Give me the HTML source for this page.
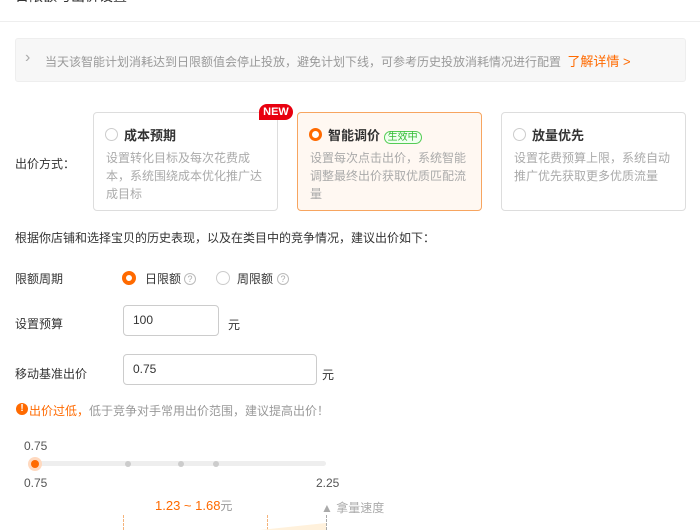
<!DOCTYPE html><html><head><meta charset="utf-8"><style>
*{margin:0;padding:0;box-sizing:border-box}
body{width:700px;height:530px;overflow:hidden;background:#fff;font-family:"Liberation Sans","Noto Sans CJK SC",sans-serif;font-size:12px;color:#333;position:relative}
.a{position:absolute;white-space:nowrap}
.card{position:absolute;top:112px;width:185px;height:99px;border:1px solid #ddd;border-radius:4px;background:#fff}
.card .t{position:absolute;left:30px;top:12px;font-size:13px;font-weight:bold;color:#333}
.card .r{position:absolute;left:11px;top:15px;width:13px;height:13px;border:1px solid #ccc;border-radius:50%;background:#fff}
.card .d{position:absolute;left:12px;top:36px;width:160px;color:#aaa;font-size:12px;line-height:18px;white-space:normal}
.rad{position:absolute;width:14px;height:14px;border-radius:50%}
.q{position:absolute;width:12px;height:12px;border:1px solid #bbb;border-radius:50%;font-size:9px;color:#aaa;text-align:center;line-height:10px}
.inp{position:absolute;border:1px solid #ccc;border-radius:4px;padding-left:9px;line-height:29px;font-size:12px;color:#333}
.dash{position:absolute;top:515px;width:0;height:15px;border-left:1px dashed #f5b37a}
</style></head><body>
<div class="a" style="left:15px;top:-14px;font-size:14px;color:#333">日限额与出价设置</div>
<div class="a" style="left:0;top:21px;width:700px;height:1px;background:#eee"></div>
<div class="a" style="left:15px;top:38px;width:671px;height:44px;background:#f7f7f7;border:1px solid #eee;border-radius:3px"></div>
<div class="a" style="left:25px;top:49px;color:#aaa;font-size:16px">›</div>
<div class="a" style="left:45px;top:51px;color:#999;font-size:12px">当天该智能计划消耗达到日限额值会停止投放，避免计划下线，可参考历史投放消耗情况进行配置 <span style="color:#ff6a00;font-size:13px;margin-left:3px">了解详情 &gt;</span></div>
<div class="a" style="left:15px;top:155px">出价方式：</div>
<div class="card" style="left:93px"><div class="r"></div><div class="t">成本预期</div><div class="d">设置转化目标及每次花费成本，系统围绕成本优化推广达成目标</div></div>
<div class="a" style="left:259px;top:104px;width:34px;height:16px;background:#e8000f;border-radius:8px 8px 8px 0;color:#fff;font-weight:bold;font-size:11px;text-align:center;line-height:16px">NEW</div>
<div class="card" style="left:297px;border-color:#f7a560;background:#fff8f2"><div class="r" style="border:3px solid #ff6a00"></div><div class="t">智能调价 <span style="font-weight:normal;font-size:10px;color:#3b3;border:1px solid #5c5;border-radius:8px;padding:0 3px;background:#f0fff0">生效中</span></div><div class="d">设置每次点击出价，系统智能调整最终出价获取优质匹配流量</div></div>
<div class="card" style="left:501px"><div class="r"></div><div class="t">放量优先</div><div class="d">设置花费预算上限，系统自动推广优先获取更多优质流量</div></div>
<div class="a" style="left:15px;top:229px">根据你店铺和选择宝贝的历史表现，以及在类目中的竞争情况，建议出价如下：</div>
<div class="a" style="left:15px;top:270px">限额周期</div>
<div class="rad" style="left:122px;top:271px;border:4px solid #ff6a00"></div>
<div class="a" style="left:145px;top:270px">日限额</div><div class="q" style="left:184px;top:273px">?</div>
<div class="rad" style="left:216px;top:271px;border:1px solid #ccc"></div>
<div class="a" style="left:237px;top:270px">周限额</div><div class="q" style="left:277px;top:273px">?</div>
<div class="a" style="left:15px;top:315px">设置预算</div>
<div class="inp" style="left:123px;top:305px;width:96px;height:31px">100</div>
<div class="a" style="left:228px;top:316px">元</div>
<div class="a" style="left:15px;top:365px">移动基准出价</div>
<div class="inp" style="left:123px;top:354px;width:194px;height:31px">0.75</div>
<div class="a" style="left:322px;top:366px">元</div>
<div class="a" style="left:16px;top:403px;width:12px;height:12px;border-radius:50%;background:#ff6a00;color:#fff;font-size:10px;font-weight:bold;text-align:center;line-height:12px">!</div>
<div class="a" style="left:29px;top:402px;color:#ff6a00">出价过低，<span style="color:#999">低于竞争对手常用出价范围，建议提高出价！</span></div>
<div class="a" style="left:24px;top:439px;color:#555">0.75</div>
<div class="a" style="left:30px;top:461px;width:296px;height:5px;background:#eee;border-radius:3px"></div>
<div class="a" style="left:28px;top:457px;width:14px;height:14px;border-radius:50%;background:#ffd9bf"></div>
<div class="a" style="left:31px;top:460px;width:8px;height:8px;border-radius:50%;background:#ff6a00"></div>
<div class="a" style="left:125px;top:461px;width:6px;height:6px;border-radius:50%;background:#ccc"></div>
<div class="a" style="left:178px;top:461px;width:6px;height:6px;border-radius:50%;background:#ccc"></div>
<div class="a" style="left:213px;top:461px;width:6px;height:6px;border-radius:50%;background:#ccc"></div>
<div class="a" style="left:24px;top:476px;color:#555">0.75</div>
<div class="a" style="left:316px;top:476px;color:#555">2.25</div>
<div class="a" style="left:155px;top:497px;color:#ff6a00;font-size:13px">1.23 ~ 1.68<span style="color:#999;font-size:12px">元</span></div>
<div class="a" style="left:321px;top:499px;color:#aaa">▲ 拿量速度</div>
<div class="dash" style="left:123px"></div>
<div class="dash" style="left:267px"></div>
<div class="dash" style="left:326px;border-color:#aaa"></div>
<svg class="a" style="left:260px;top:520px" width="66" height="10"><polygon points="0,10 66,3 66,10" fill="#fff1dc"/></svg>
</body></html>
